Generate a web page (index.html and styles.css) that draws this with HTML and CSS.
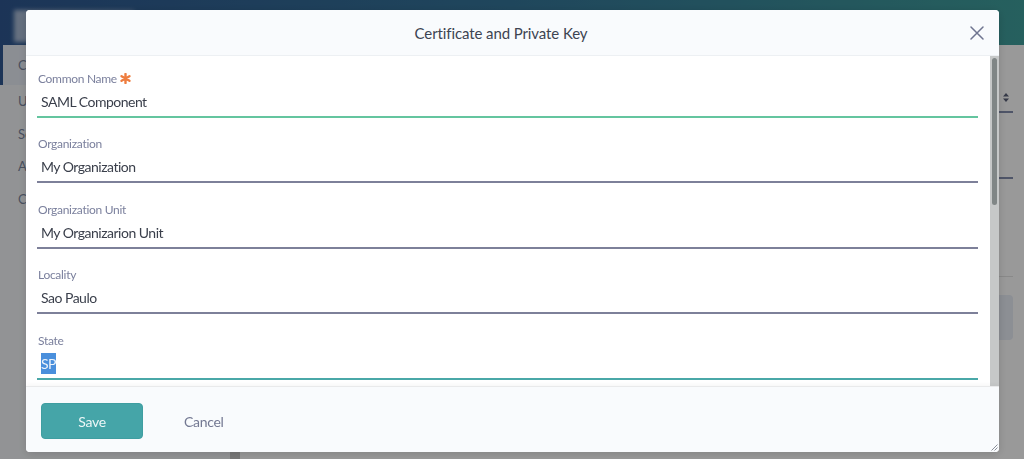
FILE: index.html
```html
<!DOCTYPE html>
<html lang="en">
<head>
<meta charset="utf-8">
<title>Certificate and Private Key</title>
<link rel="stylesheet" href="styles.css">
</head>
<body>
<div class="app">
  <header class="topbar"><div class="logo"></div></header>
  <div class="layout">
    <nav class="sidebar">
      <div class="nav-item active">Certificates</div>
      <div class="nav-item">Users</div>
      <div class="nav-item">Sessions</div>
      <div class="nav-item">Applications</div>
      <div class="nav-item">Configuration</div>
    </nav>
    <div class="side-gutter"></div>
    <main class="main">
      <div class="bg-field bg-select">
        <svg class="bg-arrows" width="6" height="9" viewBox="0 0 6 9"><path d="M0 3.5 L3 0 L6 3.5 Z M0 5.5 L3 9 L6 5.5 Z" fill="#5a6178"/></svg>
      </div>
      <div class="bg-field bg-input"></div>
      <div class="bg-sep"></div>
      <div class="bg-box"></div>
    </main>
  </div>
</div>

<div class="overlay"></div>

<div class="modal">
  <div class="modal-header">
    <div class="modal-title">Certificate and Private Key</div>
    <button class="close-btn" aria-label="Close">
      <svg width="14" height="14" viewBox="0 0 14 14"><path d="M1 1 L13 13 M13 1 L1 13" stroke="#6f7590" stroke-width="1.5" stroke-linecap="round"/></svg>
    </button>
  </div>
  <div class="modal-body">
    <div class="form">
      <div class="field">
        <div class="field-label">Common Name
          <svg class="req" width="11" height="11" viewBox="0 0 12 12"><path d="M6 1 V11 M1.7 3.5 L10.3 8.5 M10.3 3.5 L1.7 8.5" stroke="#ee7d3f" stroke-width="2.6" stroke-linecap="round"/></svg>
        </div>
        <div class="field-input valid">SAML Component</div>
      </div>
      <div class="field">
        <div class="field-label">Organization</div>
        <div class="field-input">My Organization</div>
      </div>
      <div class="field">
        <div class="field-label">Organization Unit</div>
        <div class="field-input">My Organizarion Unit</div>
      </div>
      <div class="field">
        <div class="field-label">Locality</div>
        <div class="field-input">Sao Paulo</div>
      </div>
      <div class="field">
        <div class="field-label">State</div>
        <div class="field-input focused"><span class="selected">SP</span></div>
      </div>
    </div>
    <div class="scrollbar"><div class="scroll-thumb"></div></div>
  </div>
  <div class="modal-footer">
    <button class="btn btn-primary">Save</button>
    <button class="btn btn-link">Cancel</button>
  </div>
  <svg class="resize-grip" width="7" height="7" viewBox="0 0 7 7"><path d="M6.5 0.5 L0.5 6.5 M6.5 3.5 L3.5 6.5" stroke="#8a8f99" stroke-width="1"/></svg>
</div>
</body>
</html>
```

FILE: styles.css
```css
* { box-sizing: border-box; }

html, body {
  margin: 0;
  padding: 0;
  height: 100%;
  overflow: hidden;
  font-family: Lato, "Open Sans", "Liberation Sans", sans-serif;
}

.app {
  height: 100vh;
  display: flex;
  flex-direction: column;
  background: #ffffff;
}

.topbar {
  height: 45px;
  flex: none;
  background: linear-gradient(90deg, #2f5892 0%, #35769a 50%, #40a09d 100%);
  padding: 10px 0 0 14px;
}

.logo {
  width: 120px;
  height: 32px;
  background: linear-gradient(90deg, rgba(225,232,244,0.7), rgba(200,214,234,0.45));
  filter: blur(2px);
}

.layout {
  flex: 1;
  display: flex;
}

.sidebar {
  width: 230px;
  background: #f4f6f9;
  color: #7b869e;
  font-size: 13px;
}

.nav-item {
  height: 32.5px;
  line-height: 32.5px;
  padding-left: 18px;
  white-space: nowrap;
}

.nav-item.active {
  height: 40px;
  line-height: 40px;
  padding-left: 15px;
  border-left: 3px solid #2f5892;
  background: #e8edf6;
}

.side-gutter {
  width: 10px;
  background: #c8c8c8;
}

.main {
  flex: 1;
  padding: 35px 11px 0 20px;
}

.bg-field {
  height: 33px;
  border-bottom: 2px solid #848ead;
  display: flex;
  align-items: flex-start;
  justify-content: flex-end;
}

.bg-arrows {
  margin: 13px 4px 0 0;
}

.bg-input {
  margin-top: 33px;
}

.bg-sep {
  margin-top: 97px;
  height: 1px;
  background: #e4e4e4;
}

.bg-box {
  margin-top: 18px;
  height: 45px;
  border-radius: 4px;
  background: #e9eef7;
}

.overlay {
  position: fixed;
  inset: 0;
  background: rgba(0, 0, 0, 0.4);
}

.modal {
  position: fixed;
  left: 26px;
  top: 10px;
  width: 973px;
  height: 442px;
  background: #ffffff;
  border-radius: 4px;
  overflow: hidden;
  display: flex;
  flex-direction: column;
  box-shadow: 0 2px 10px rgba(0,0,0,0.15);
}

.modal-header {
  height: 46px;
  flex: none;
  display: flex;
  align-items: center;
  padding: 0 11px 0 10px;
  background: #f9fbfd;
  border-bottom: 1px solid #edf0f3;
}

.modal-title {
  flex: 1;
  text-align: center;
  font-size: 15px;
  letter-spacing: -0.1px;
  color: #3d4452;
  padding-top: 1px;
}

.close-btn {
  width: 22px;
  height: 22px;
  padding: 0;
  border: 0;
  background: transparent;
  display: flex;
  align-items: center;
  justify-content: center;
}

.modal-body {
  flex: 1;
  min-height: 0;
  display: flex;
  background: #ffffff;
}

.form {
  flex: 1;
  overflow: hidden;
  padding: 14.5px 12px 0 11px;
}

.scrollbar {
  width: 9px;
  flex: none;
  background: #c6c8c8;
  padding: 2px;
}

.scroll-thumb {
  height: 147px;
  background: #808686;
  border-radius: 3px;
}

.field {
  margin-bottom: 18.5px;
}

.field-label {
  height: 16px;
  line-height: 16px;
  font-size: 12px;
  letter-spacing: -0.3px;
  color: #7b809d;
  padding-left: 1px;
  display: flex;
  align-items: center;
  gap: 3px;
}

.req {
  margin-top: -1px;
}

.field-input {
  height: 31px;
  padding: 2px 4px 0 4px;
  line-height: 25px;
  font-size: 14px;
  letter-spacing: -0.5px;
  color: #3a3f4b;
  border-bottom: 2px solid #7d8099;
}

.field-input.valid {
  border-bottom-color: #64c59f;
}

.field-input.focused {
  border-bottom-color: #4aa8a8;
}

.selected {
  background: #4a8fdc;
  color: #eef4fb;
  padding: 2px 0;
}

.modal-footer {
  height: 66px;
  flex: none;
  display: flex;
  align-items: flex-start;
  padding: 16px 15px 0;
  background: #f9fbfd;
  border-top: 1px solid #e9eaeb;
  box-shadow: 0 -2px 4px rgba(0,0,0,0.03);
  gap: 17px;
}

.btn {
  font-family: inherit;
  font-size: 14px;
  letter-spacing: -0.3px;
  height: 36px;
  border-radius: 4px;
  border: 0;
  cursor: pointer;
}

.btn-primary {
  width: 102px;
  background: #45a5a8;
  color: #edf7f7;
  border: 1px solid #3f9ea1;
}

.btn-link {
  background: transparent;
  color: #737892;
  padding: 0 24px;
}

.resize-grip {
  position: absolute;
  right: 1px;
  bottom: 1px;
}
```
